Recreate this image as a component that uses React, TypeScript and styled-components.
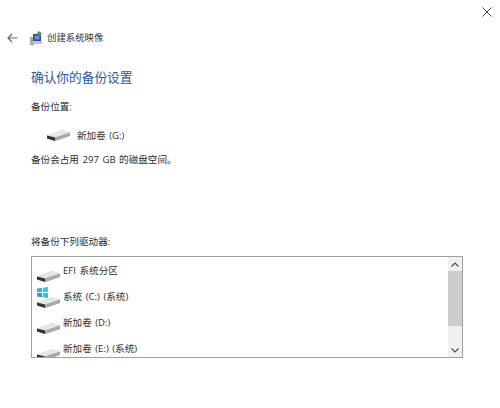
import React from 'react';
import styled, { createGlobalStyle } from 'styled-components';

const GlobalStyle = createGlobalStyle`
  html, body {
    margin: 0;
    background: #fff;
  }
  body {
    font-family: "Open Sans", "Noto Sans CJK SC", sans-serif;
    color: #333;
  }
`;

const Page = styled.div`
  position: relative;
  width: 500px;
  height: 408px;
  overflow: hidden;
  background: #fff;
`;

const CloseButton = styled.div`
  position: absolute;
  top: 5px;
  right: 6px;
  width: 14px;
  height: 14px;
  display: flex;
`;

const Header = styled.div`
  display: flex;
  align-items: center;
  height: 16px;
  padding: 30px 0 0 7px;
`;

const BackArrow = styled.div`
  display: flex;
  width: 23px;
`;

const Title = styled.div`
  margin-left: 4px;
  font-size: 9.4px;
  line-height: 16px;
  color: #333;
`;

const Content = styled.div`
  display: flex;
  flex-direction: column;
  padding: 22px 37px 0 31px;
`;

const Heading = styled.div`
  font-size: 12.7px;
  line-height: 18px;
  color: #2a5a9e;
`;

const Label = styled.div<{ $top: number }>`
  margin-top: ${(p) => p.$top}px;
  font-size: 9.6px;
  word-spacing: 1px;
  line-height: 14px;
  color: #2e2e2e;
`;

const Destination = styled.div`
  display: flex;
  align-items: center;
  gap: 7px;
  margin: 14px 0 0 16px;
  height: 14px;
  font-size: 9.6px;
  word-spacing: 1px;
  color: #333;
`;

const DriveList = styled.div`
  display: flex;
  margin-top: 7px;
  height: 100px;
  border: 1px solid #a0a0a0;
`;

const Rows = styled.div`
  flex: 1;
  overflow: hidden;
  padding: 3px 0 0 5px;
`;

const Row = styled.div`
  display: flex;
  gap: 2px;
  height: 26px;
  font-size: 9.6px;
  word-spacing: 1px;
  color: #2e2e2e;
`;

const RowText = styled.span`
  margin-top: 4px;
  line-height: 14px;
`;

const RowIcon = styled.div`
  position: relative;
  width: 24px;
  height: 26px;
  flex: none;
`;

const Scrollbar = styled.div`
  width: 14px;
  display: flex;
  flex-direction: column;
  background: #f0f0f0;
`;

const ScrollButton = styled.div`
  height: 14px;
  display: flex;
  align-items: center;
  justify-content: center;
`;

const ScrollThumb = styled.div`
  height: 55px;
  background: #cdcdcd;
`;

const ScrollTrack = styled.div`
  flex: 1;
`;

const DriveShape = () => (
  <>
    <path d="M0 6.5 L15 1 L23 3.5 L23 7 L8 12 L0 9.5 Z" fill="#cfcfcf" />
    <path d="M0 6.5 L8 8.5 L23 3.5 L15 1 Z" fill="#e6e6e6" />
    <path d="M0 6.5 L8 8.5 L8 12 L0 9.5 Z" fill="#333" />
    <path d="M8 8.5 L23 3.5 L23 7 L8 12 Z" fill="#a8a8a8" />
  </>
);

const DriveIcon = ({ top }: { top: number }) => (
  <svg width="23" height="13" viewBox="0 0 23 13" style={{ position: 'absolute', left: 0, top }}>
    <DriveShape />
  </svg>
);

const WinLogo = () => (
  <svg width="11" height="11" viewBox="0 0 11 11" style={{ position: 'absolute', left: 0, top: 1 }}>
    <path d="M0 1.5 L5 .8 V5 H0 Z" fill="#29b4e8" />
    <path d="M5.8 .7 L11 0 V5 H5.8 Z" fill="#3ac4ee" />
    <path d="M0 6 H5 V10.2 L0 9.5 Z" fill="#1fa4dc" />
    <path d="M5.8 6 H11 V11 L5.8 10.3 Z" fill="#35bdea" />
  </svg>
);

const BackupIcon = () => (
  <svg width="13" height="14" viewBox="0 0 13 14">
    <rect x="0" y="6" width="4" height="8" fill="#a8a8a8" />
    <rect x="3" y="3" width="8" height="7" fill="#2c4f96" />
    <rect x="4.5" y="4.5" width="5" height="4" fill="#6f8fc8" />
    <path d="M8 0 L12 2 L10 5 L7 3 Z" fill="#4f9a58" />
    <rect x="3" y="10" width="9" height="3" fill="#c4c4c4" />
  </svg>
);

const rows = [
  { name: 'EFI 系统分区', top: 10, logo: false },
  { name: '系统 (C:) (系统)', top: 10, logo: true },
  { name: '新加卷 (D:)', top: 10, logo: false },
  { name: '新加卷 (E:) (系统)', top: 10, logo: false },
];

const App: React.FC = () => {
  return (
    <Page>
      <GlobalStyle />
      <CloseButton>
        <svg width="14" height="14" viewBox="0 0 14 14">
          <path d="M2.5 2.5 L11.5 11.5 M11.5 2.5 L2.5 11.5" stroke="#444" strokeWidth="1" />
        </svg>
      </CloseButton>
      <Header>
        <BackArrow>
          <svg width="11" height="10" viewBox="0 0 11 10">
            <path d="M10.5 5 H1 M5 1 L1 5 L5 9" fill="none" stroke="#666" strokeWidth="1.2" />
          </svg>
        </BackArrow>
        <BackupIcon />
        <Title>创建系统映像</Title>
      </Header>
      <Content>
        <Heading>确认你的备份设置</Heading>
        <Label $top={14}>备份位置:</Label>
        <Destination>
          <svg width="23" height="13" viewBox="0 0 23 13">
            <DriveShape />
          </svg>
          新加卷 (G:)
        </Destination>
        <Label $top={11}>备份会占用 297 GB 的磁盘空间。</Label>
        <Label $top={68}>将备份下列驱动器:</Label>
        <DriveList>
          <Rows>
            {rows.map((row) => (
              <Row key={row.name}>
                <RowIcon>
                  <DriveIcon top={row.top} />
                  {row.logo && <WinLogo />}
                </RowIcon>
                <RowText>{row.name}</RowText>
              </Row>
            ))}
          </Rows>
          <Scrollbar>
            <ScrollButton>
              <svg width="8" height="5" viewBox="0 0 8 5">
                <path d="M.5 4.5 L4 1 L7.5 4.5" fill="none" stroke="#505050" strokeWidth="1.2" />
              </svg>
            </ScrollButton>
            <ScrollThumb />
            <ScrollTrack />
            <ScrollButton>
              <svg width="8" height="5" viewBox="0 0 8 5">
                <path d="M.5 .5 L4 4 L7.5 .5" fill="none" stroke="#505050" strokeWidth="1.2" />
              </svg>
            </ScrollButton>
          </Scrollbar>
        </DriveList>
      </Content>
    </Page>
  );
};

export default App;
